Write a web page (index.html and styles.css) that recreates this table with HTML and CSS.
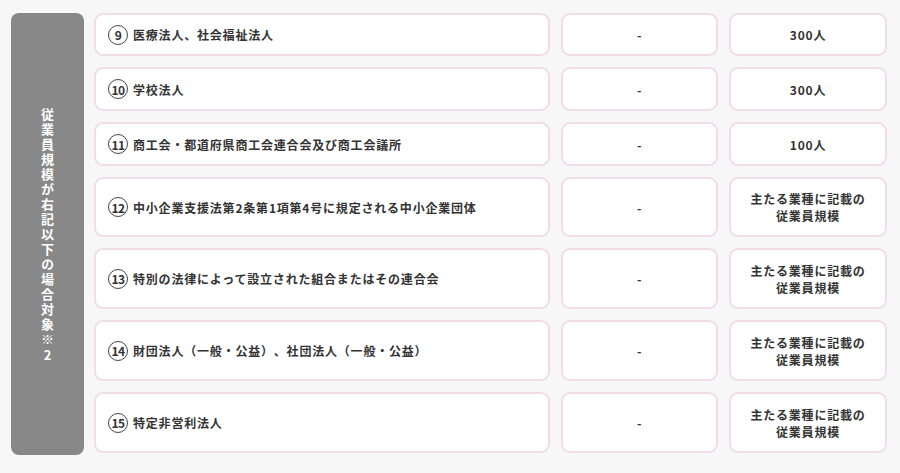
FILE: index.html
```html
<!DOCTYPE html>
<html lang="ja">
<head>
<meta charset="utf-8">
<link rel="stylesheet" href="styles.css">
</head>
<body>
<div class="wrap">
  <div class="side"><span class="side-text">従業員規模が右記以下の場合対象※<span class="up">2</span></span></div>
  <div class="grid">
    <div class="cell name"><span class="num">9</span>医療法人、社会福祉法人</div>
    <div class="cell center">-</div>
    <div class="cell center">300人</div>

    <div class="cell name"><span class="num">10</span>学校法人</div>
    <div class="cell center">-</div>
    <div class="cell center">300人</div>

    <div class="cell name"><span class="num">11</span>商工会・都道府県商工会連合会及び商工会議所</div>
    <div class="cell center">-</div>
    <div class="cell center">100人</div>

    <div class="cell name"><span class="num">12</span>中小企業支援法第2条第1項第4号に規定される中小企業団体</div>
    <div class="cell center">-</div>
    <div class="cell center">主たる業種に記載の<br>従業員規模</div>

    <div class="cell name"><span class="num">13</span>特別の法律によって設立された組合またはその連合会</div>
    <div class="cell center">-</div>
    <div class="cell center">主たる業種に記載の<br>従業員規模</div>

    <div class="cell name"><span class="num">14</span>財団法人（一般・公益）、社団法人（一般・公益）</div>
    <div class="cell center">-</div>
    <div class="cell center">主たる業種に記載の<br>従業員規模</div>

    <div class="cell name"><span class="num">15</span>特定非営利法人</div>
    <div class="cell center">-</div>
    <div class="cell center">主たる業種に記載の<br>従業員規模</div>
  </div>
</div>
</body>
</html>
```

FILE: styles.css
```css
html, body {
  margin: 0;
  padding: 0;
  background: #f7f7f7;
}
body {
  font-family: "Noto Sans CJK JP", "Noto Sans", sans-serif;
  color: #333;
  text-spacing-trim: space-all;
}
.wrap {
  display: flex;
  gap: 10px;
  padding: 13px 13px 0 11px;
}
.side {
  width: 73px;
  height: 442px;
  background: #888;
  border-radius: 8px;
  display: flex;
  align-items: center;
  justify-content: center;
}
.side-text {
  writing-mode: vertical-rl;
  text-orientation: upright;
  color: #fff;
  font-weight: 700;
  font-size: 13px;
  letter-spacing: 2px;
  line-height: 1;
}
.up {
  text-combine-upright: all;
}
.grid {
  display: grid;
  grid-template-columns: 456px 157px 158px;
  grid-template-rows: 43px 44px 44px 60px 61px 61px 61px;
  gap: 11px;
}
.cell {
  box-sizing: border-box;
  background: #fff;
  border: 2px solid #f2dcea;
  border-radius: 9px;
  display: flex;
  align-items: center;
  font-size: 12px;
  font-weight: 700;
  letter-spacing: 0.8px;
  line-height: 17px;
}
.name {
  padding-left: 12px;
}
.center {
  justify-content: center;
  text-align: center;
}
.num {
  box-sizing: border-box;
  width: 20px;
  height: 20px;
  border: 1.5px solid #444;
  border-radius: 50%;
  display: inline-flex;
  align-items: center;
  justify-content: center;
  font-size: 12px;
  font-weight: 700;
  letter-spacing: -0.5px;
  margin-right: 5px;
  flex: none;
}
```
